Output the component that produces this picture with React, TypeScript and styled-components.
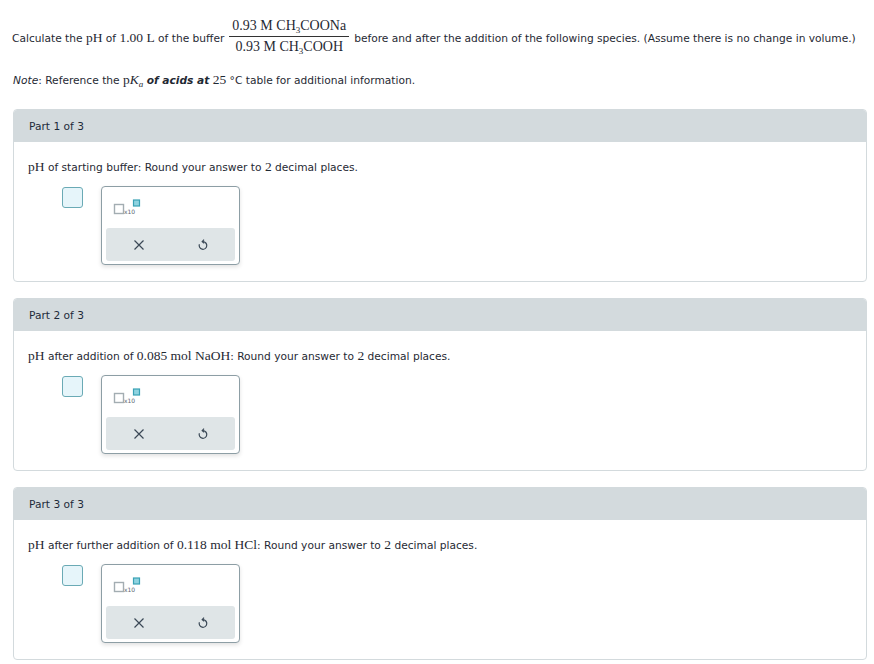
import React from "react";
import styled, { createGlobalStyle } from "styled-components";

const Global = createGlobalStyle`
  html, body { margin: 0; padding: 0; background: #fff; }
  body { font-family: "DejaVu Sans", Verdana, sans-serif; font-size: 10.65px; color: #1f2933; }
`;

const Page = styled.div`
  padding: 18px 7px 0 13px;
  width: 854px;
`;

const Intro = styled.div`
  margin-left: -1px;
  height: 40px;
  line-height: 40px;
  white-space: nowrap;
`;

const M = styled.span`
  font-family: "Liberation Serif", "Times New Roman", serif;
  font-size: 13.5px;
`;

const Sub = styled.sub`
  font-size: 9px;
  vertical-align: -3px;
  line-height: 0;
`;

const Frac = styled.span`
  display: inline-flex;
  flex-direction: column;
  align-items: center;
  vertical-align: middle;
  margin: 0 5px 0 5px;
  font-family: "Liberation Serif", "Times New Roman", serif;
  font-size: 14px;
  line-height: 17px;
  position: relative;
  top: -3px;
`;

const Num = styled.span`
  padding: 0 3px 2px;
  border-bottom: 1px solid #333;
`;

const Den = styled.span`
  padding: 1px 3px 0;
`;

const Note = styled.div`
  margin-top: 12px;
  line-height: 20px;
  white-space: nowrap;
`;

const Em = styled.em`
  font-style: italic;
`;

const BoldEm = styled.b`
  font-style: italic;
  font-weight: bold;
`;

const Cards = styled.div`
  margin-top: 18px;
  display: flex;
  flex-direction: column;
  gap: 16px;
`;

const Card = styled.section`
  border: 1px solid #d3dadd;
  border-radius: 4px;
  overflow: hidden;
  box-sizing: border-box;
  height: 173px;
`;

const CardHeader = styled.div`
  background: #d3dadd;
  height: 32px;
  line-height: 33px;
  padding-left: 15px;
  color: #1d2a3a;
`;

const CardBody = styled.div`
  padding: 16px 14px 0;
`;

const Question = styled.div`
  height: 18px;
  line-height: 18px;
  white-space: nowrap;
`;

const AnswerRow = styled.div`
  display: flex;
  align-items: flex-start;
  margin-top: 10px;
  padding-left: 34px;
  gap: 18px;
`;

const InputBox = styled.div`
  width: 19px;
  height: 19px;
  margin-top: 1px;
  background: #e6f5fa;
  border: 1px solid #6aaab5;
  border-radius: 3px;
`;

const Palette = styled.div`
  width: 137px;
  height: 77px;
  border: 1px solid #8d9ea5;
  border-radius: 4px;
  box-shadow: 0 2px 4px rgba(0, 0, 0, 0.12);
  display: flex;
  flex-direction: column;
  background: #fff;
`;

const Templates = styled.div`
  height: 41px;
  padding: 12px 0 0 11px;
  box-sizing: border-box;
`;

const Tools = styled.div`
  margin: 0 4px 3px;
  height: 33px;
  background: #dfe5e7;
  border-radius: 3px;
  display: flex;
  align-items: center;
  justify-content: space-between;
  padding: 0 25px 0 26px;
`;

const ToolBtn = styled.button`
  border: 0;
  background: transparent;
  padding: 0;
  width: 14px;
  height: 14px;
  display: flex;
  align-items: center;
  justify-content: center;
`;

const SciIcon = () => (
  <svg width="30" height="18" viewBox="0 0 30 18">
    <rect x="1.5" y="5.5" width="9" height="9" fill="none" stroke="#a3adb2" strokeWidth="1.4" />
    <text x="11" y="14.5" fontSize="6" fontFamily="DejaVu Sans, sans-serif" fill="#5a6670">x10</text>
    <rect x="20.5" y="1" width="6" height="6" fill="#8fd3e0" stroke="#3aa2b5" strokeWidth="1.2" />
  </svg>
);

const CloseIcon = () => (
  <svg width="12" height="12" viewBox="0 0 12 12">
    <path d="M1.5 1.5 L10.5 10.5 M10.5 1.5 L1.5 10.5" stroke="#3a4856" strokeWidth="1.2" fill="none" />
  </svg>
);

const UndoIcon = () => (
  <svg width="12" height="13" viewBox="0 0 12 13">
    <path d="M2.4 6.2 A3.8 3.8 0 1 0 6 3.7" stroke="#3a4856" strokeWidth="1.2" fill="none" />
    <path d="M7 1.6 L5.2 3.7 L7.3 5.3" stroke="#3a4856" strokeWidth="1.2" fill="none" />
  </svg>
);

const Part: React.FC<{ n: number; children: React.ReactNode }> = ({ n, children }) => (
  <Card>
    <CardHeader>Part {n} of 3</CardHeader>
    <CardBody>
      <Question>{children}</Question>
      <AnswerRow>
        <InputBox />
        <Palette>
          <Templates>
            <SciIcon />
          </Templates>
          <Tools>
            <ToolBtn aria-label="clear"><CloseIcon /></ToolBtn>
            <ToolBtn aria-label="undo"><UndoIcon /></ToolBtn>
          </Tools>
        </Palette>
      </AnswerRow>
    </CardBody>
  </Card>
);

export default function App() {
  return (
    <>
      <Global />
      <Page>
        <Intro>
          Calculate the <M>pH</M> of <M>1.00 L</M> of the buffer
          <Frac>
            <Num>0.93 M CH<Sub>3</Sub>COONa</Num>
            <Den>0.93 M CH<Sub>3</Sub>COOH</Den>
          </Frac>
          before and after the addition of the following species. (Assume there is no change in volume.)
        </Intro>
        <Note>
          <Em>Note</Em>: Reference the <M>p<i>K</i><Sub><i>a</i></Sub></M> <BoldEm>of acids at</BoldEm> <M>25</M> °C table for additional information.
        </Note>
        <Cards>
          <Part n={1}>
            <M>pH</M> of starting buffer: Round your answer to <M>2</M> decimal places.
          </Part>
          <Part n={2}>
            <M>pH</M> after addition of <M>0.085 mol NaOH</M>: Round your answer to <M>2</M> decimal places.
          </Part>
          <Part n={3}>
            <M>pH</M> after further addition of <M>0.118 mol HCl</M>: Round your answer to <M>2</M> decimal places.
          </Part>
        </Cards>
      </Page>
    </>
  );
}
